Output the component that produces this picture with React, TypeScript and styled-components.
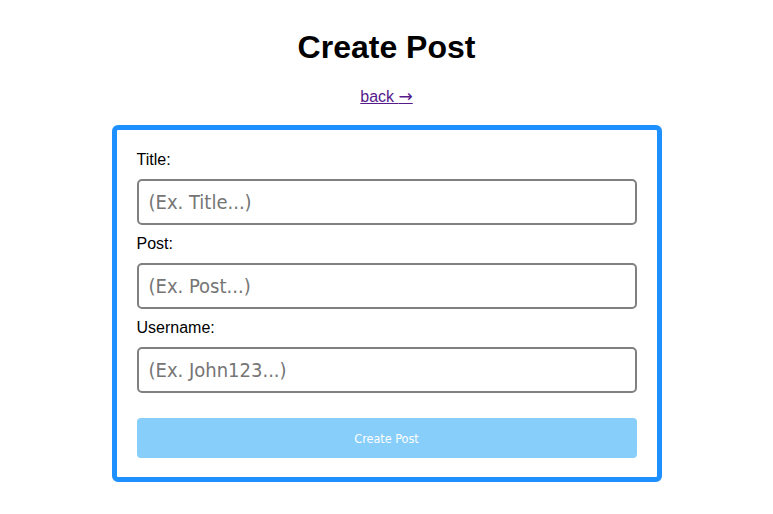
import React from "react";
import styled, { createGlobalStyle } from "styled-components";

const Global = createGlobalStyle`
  body {
    margin: 8px;
    font-family: "Liberation Sans", Arial, sans-serif;
    background: #ffffff;
    color: #000000;
  }
`;

const Page = styled.div`
  display: flex;
  flex-direction: column;
  align-items: center;
`;

const Heading = styled.h1`
  font-size: 32px;
  font-weight: bold;
  margin: 21px 0 21px;
  line-height: 37px;
`;

const BackLink = styled.a`
  display: block;
  height: 18px;
  font-size: 16px;
  color: #551a8b;
  text-decoration: underline;
  line-height: 18px;
  margin-top: 1px;
  margin-bottom: 19px;
`;

const Arrow = styled.span`
  font-family: "DejaVu Sans", sans-serif;
  font-size: 17px;
  line-height: 0;
`;

const Card = styled.form`
  box-sizing: border-box;
  width: 550px;
  border: 5px solid #1e90ff;
  border-radius: 6px;
  padding: 21px 20px 19px;
  display: flex;
  flex-direction: column;
`;

const Label = styled.label`
  font-size: 16px;
  line-height: 18px;
  margin-bottom: 10px;
`;

const Input = styled.input`
  box-sizing: border-box;
  width: 500px;
  height: 46px;
  border: 2px solid #808080;
  border-radius: 5px;
  padding: 0 10px;
  font-family: "DejaVu Sans Condensed", "DejaVu Sans", sans-serif;
  font-size: 20px;
  margin-bottom: 10px;
  outline: none;
  &::placeholder {
    color: #757575;
  }
`;

const Button = styled.button`
  box-sizing: border-box;
  width: 500px;
  height: 40px;
  margin-top: 15px;
  border: none;
  border-radius: 4px;
  background: #87cefa;
  color: #ffffff;
  font-family: "DejaVu Sans Condensed", "DejaVu Sans", sans-serif;
  font-size: 12.5px;
`;

export default function App() {
  return (
    <>
      <Global />
      <Page>
        <Heading>Create Post</Heading>
        <BackLink href="#">
          back <Arrow>→</Arrow>
        </BackLink>
        <Card onSubmit={(e) => e.preventDefault()}>
          <Label>Title:</Label>
          <Input placeholder="(Ex. Title...)" />
          <Label>Post:</Label>
          <Input placeholder="(Ex. Post...)" />
          <Label>Username:</Label>
          <Input placeholder="(Ex. John123...)" />
          <Button type="submit" disabled>
            Create Post
          </Button>
        </Card>
      </Page>
    </>
  );
}
